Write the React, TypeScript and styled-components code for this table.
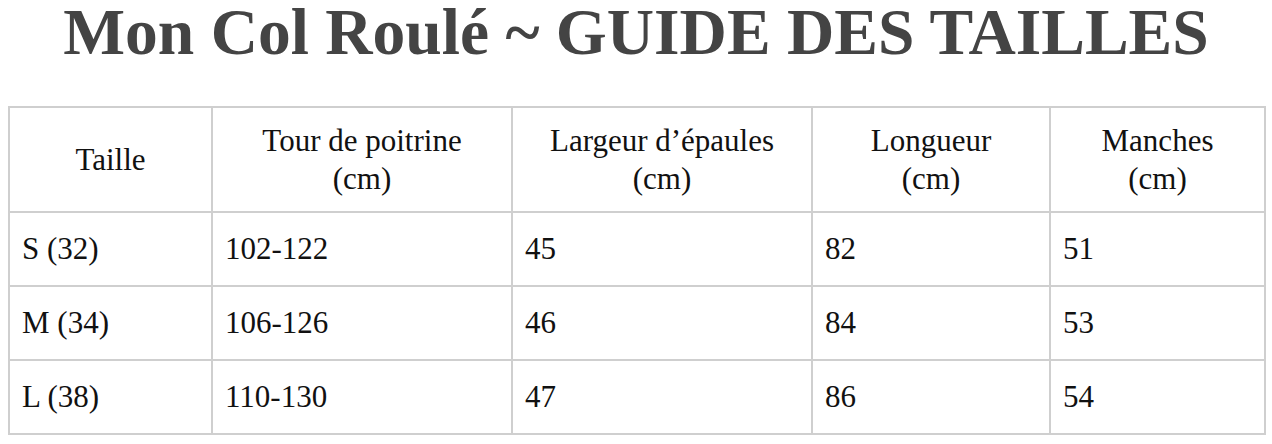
import React from 'react';
import styled, { createGlobalStyle } from 'styled-components';

const GlobalStyle = createGlobalStyle`
  html, body {
    margin: 0;
    padding: 0;
    background: #fff;
  }
  body {
    font-family: 'Liberation Serif', 'DejaVu Serif', serif;
  }
`;

const Page = styled.div`
  width: 1272px;
  height: 444px;
  padding: 0 8px;
  box-sizing: border-box;
  overflow: hidden;
`;

const Title = styled.h1`
  margin: 0;
  height: 106px;
  padding-top: 2px;
  box-sizing: border-box;
  font-family: 'Liberation Serif', serif;
  font-weight: 700;
  font-size: 65.5px;
  line-height: 60px;
  color: #444;
  text-align: center;
  white-space: nowrap;
`;

const Table = styled.table`
  width: 1256px;
  border-collapse: collapse;
  table-layout: fixed;
  color: #111;
  font-family: 'Liberation Serif', serif;
  font-size: 31px;
`;

const HeadCell = styled.th`
  height: 103px;
  border: 2px solid #cfcfcf;
  font-weight: 400;
  line-height: 38px;
  text-align: center;
  vertical-align: middle;
  padding: 0 8px;
`;

const Cell = styled.td`
  height: 72px;
  border: 2px solid #cfcfcf;
  padding: 0 12px;
  vertical-align: middle;
  text-align: left;
`;

const columns = [
  { width: 203, label: ['Taille'] },
  { width: 300, label: ['Tour de poitrine', '(cm)'] },
  { width: 300, label: ['Largeur d’épaules', '(cm)'] },
  { width: 238, label: ['Longueur', '(cm)'] },
  { width: 215, label: ['Manches', '(cm)'] },
];

const rows = [
  ['S (32)', '102-122', '45', '82', '51'],
  ['M (34)', '106-126', '46', '84', '53'],
  ['L (38)', '110-130', '47', '86', '54'],
];

export default function App() {
  return (
    <Page>
      <GlobalStyle />
      <Title>Mon Col Roulé ~ GUIDE DES TAILLES</Title>
      <Table>
        <colgroup>
          {columns.map((c, i) => (
            <col key={i} style={{ width: c.width }} />
          ))}
        </colgroup>
        <thead>
          <tr>
            {columns.map((c, i) => (
              <HeadCell key={i}>
                {c.label.map((l, j) => (
                  <div key={j}>{l}</div>
                ))}
              </HeadCell>
            ))}
          </tr>
        </thead>
        <tbody>
          {rows.map((r, i) => (
            <tr key={i}>
              {r.map((v, j) => (
                <Cell key={j}>{v}</Cell>
              ))}
            </tr>
          ))}
        </tbody>
      </Table>
    </Page>
  );
}
